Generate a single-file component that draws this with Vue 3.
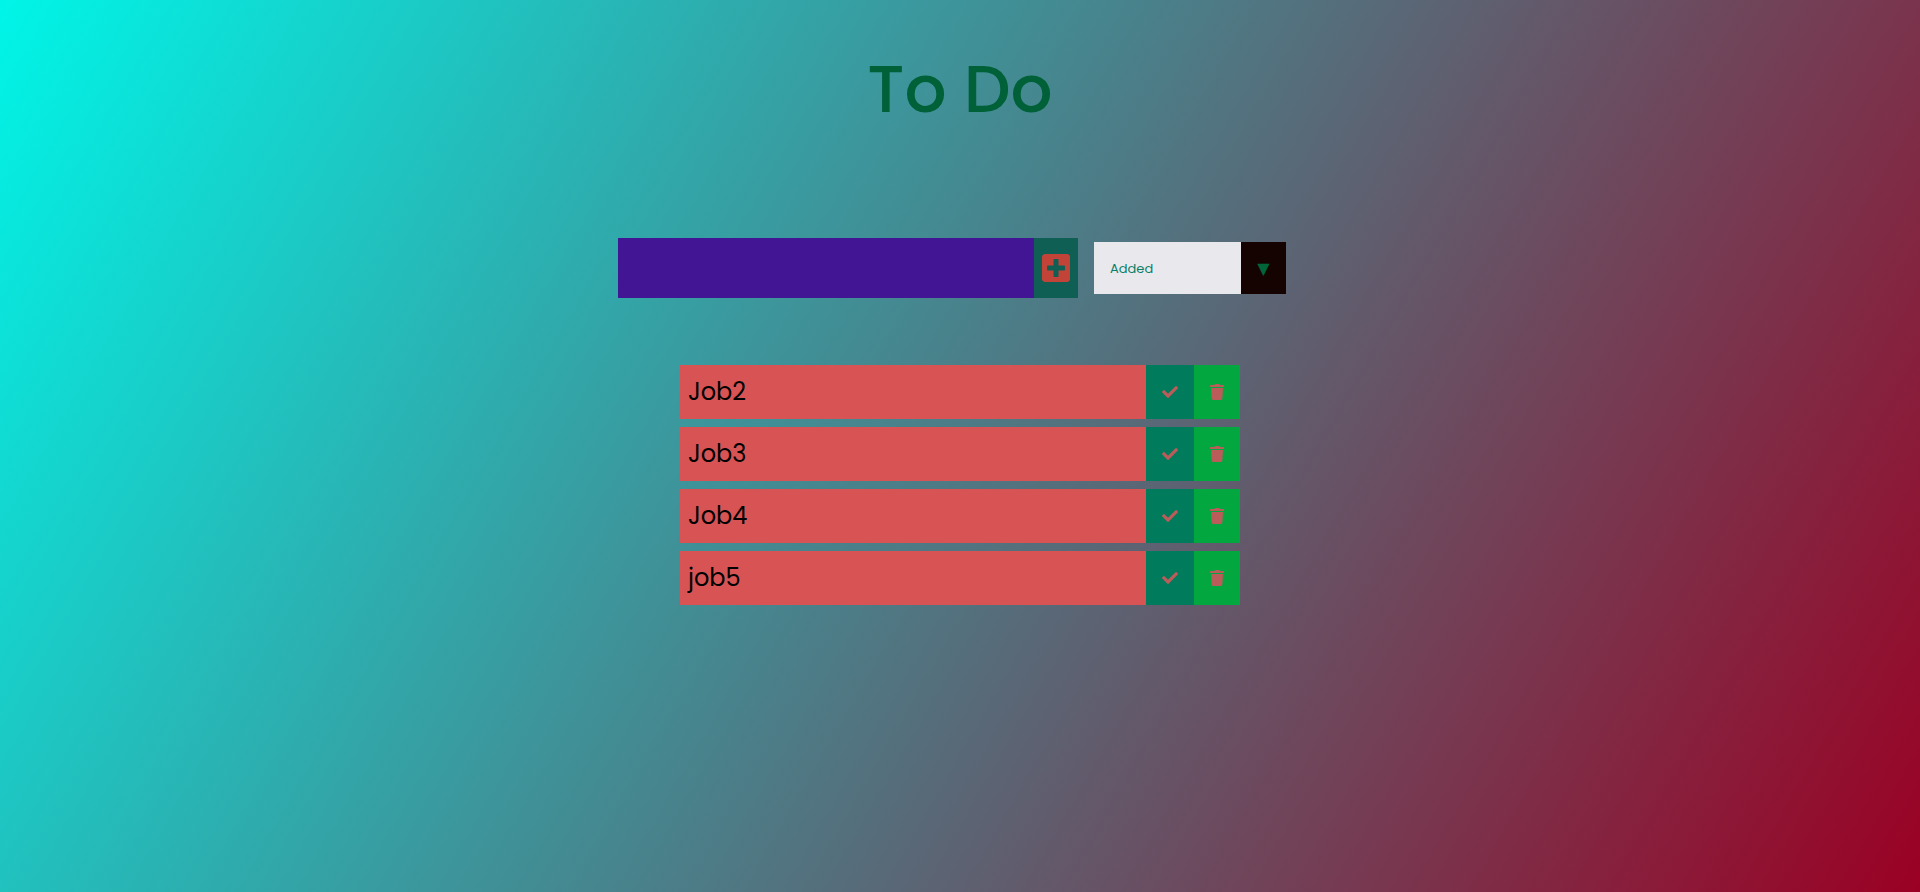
<script setup>
import { ref } from 'vue'

const draft = ref('')
const order = ref('added')
const jobs = ref(['Job2', 'Job3', 'Job4', 'job5'])

function addJob() {
  const name = draft.value.trim()
  if (name) jobs.value.push(name)
  draft.value = ''
}

function removeJob(index) {
  jobs.value.splice(index, 1)
}
</script>

<template>
  <div class="page">
    <header class="header">
      <h1 class="title">To Do</h1>
    </header>

    <main>
      <form class="toolbar" @submit.prevent="addJob">
        <div class="entry">
          <input v-model="draft" class="entry-input" type="text" aria-label="New job" />
          <button class="entry-add" type="submit" aria-label="Add job">
            <svg width="28" height="32" viewBox="0 0 448 512" aria-hidden="true">
              <path fill="currentColor" d="M400 32H48C21.500 32 0 53.500 0 80v352c0 26.500 21.500 48 48 48h352c26.500 0 48-21.500 48-48V80c0-26.500-21.500-48-48-48zm-32 252c0 6.600-5.400 12-12 12h-92v92c0 6.600-5.400 12-12 12h-56c-6.600 0-12-5.400-12-12v-92H92c-6.600 0-12-5.400-12-12v-56c0-6.600 5.400-12 12-12h92v-92c0-6.600 5.400-12 12-12h56c6.600 0 12 5.400 12 12v92h92c6.600 0 12 5.400 12 12v56z" />
            </svg>
          </button>
        </div>
        <div class="sort">
          <select v-model="order" class="sort-select" aria-label="Sort jobs">
            <option value="added">Added</option>
          </select>
          <span class="sort-arrow" aria-hidden="true">▼</span>
        </div>
      </form>

      <ul class="jobs">
        <li v-for="(job, index) in jobs" :key="index" class="job">
          <span class="job-name">{{ job }}</span>
          <button class="job-button job-done" type="button" :aria-label="`Complete ${job}`">
            <svg width="16" height="16" viewBox="0 0 512 512" aria-hidden="true">
              <path fill="currentColor" d="M173.898 439.404l-166.400-166.400c-9.997-9.997-9.997-26.206 0-36.204l36.203-36.204c9.997-9.998 26.207-9.998 36.204 0L192 312.690 432.095 72.596c9.997-9.997 26.207-9.997 36.204 0l36.203 36.204c9.997 9.997 9.997 26.206 0 36.204l-294.400 294.401c-9.998 9.997-26.207 9.997-36.204-.001z" />
            </svg>
          </button>
          <button class="job-button job-remove" type="button" :aria-label="`Delete ${job}`" @click="removeJob(index)">
            <svg width="14" height="16" viewBox="0 0 448 512" aria-hidden="true">
              <path fill="currentColor" d="M432 32H312l-9.400-18.700A24 24 0 0 0 281.100 0H166.800a23.720 23.720 0 0 0-21.400 13.300L136 32H16A16 16 0 0 0 0 48v32a16 16 0 0 0 16 16h416a16 16 0 0 0 16-16V48a16 16 0 0 0-16-16zM53.200 467a48 48 0 0 0 47.900 45h245.800a48 48 0 0 0 47.900-45L416 128H32z" />
            </svg>
          </button>
        </li>
      </ul>
    </main>
  </div>
</template>

<style>
body {
  margin: 0;
}
</style>

<style scoped>
.page {
  box-sizing: border-box;
  min-height: 100vh;
  padding-bottom: 32px;
  background: linear-gradient(120deg, #00f5e8, #9b0023);
  font-family: Poppins, Inter, sans-serif;
}

.header {
  display: flex;
  align-items: center;
  justify-content: center;
  min-height: 178px;
}

.title {
  margin: 0;
  color: #006038;
  font-size: 66px;
  font-weight: 500;
  line-height: 96px;
}

.toolbar {
  display: flex;
  flex-wrap: wrap;
  align-items: center;
  justify-content: center;
  min-height: 60px;
  padding: 60px 0;
}

.entry {
  display: flex;
  height: 60px;
}

.entry-input {
  box-sizing: border-box;
  width: 416px;
  min-width: 0;
  padding: 8px;
  border: 0;
  border-radius: 0;
  outline: 0;
  background: #421595;
  color: #fff;
  font: inherit;
  font-size: 32px;
}

.entry-add {
  display: flex;
  align-items: center;
  padding: 8px;
  border: 0;
  background: #0f5f55;
  color: #c24439;
  cursor: pointer;
}

.sort {
  position: relative;
  margin: 0 16px;
}

.sort-select {
  display: block;
  box-sizing: border-box;
  width: 192px;
  height: 52px;
  padding: 0 61px 0 16px;
  border: 0;
  border-radius: 0;
  appearance: none;
  background: #e9e8ed;
  color: #0b7f69;
  font: inherit;
  font-size: 13px;
  cursor: pointer;
}

.sort-arrow {
  position: absolute;
  top: 0;
  right: 0;
  display: flex;
  align-items: center;
  justify-content: center;
  width: 45px;
  height: 52px;
  background: #140300;
  color: #00663a;
  font-family: "DejaVu Sans", sans-serif;
  font-size: 16px;
  pointer-events: none;
}

.jobs {
  display: flex;
  flex-direction: column;
  gap: 8px;
  width: 560px;
  max-width: 100%;
  margin: 0 auto;
  padding: 7px 0 0;
  list-style: none;
}

.job {
  display: flex;
  min-height: 54px;
  background: #d85454;
}

.job-name {
  flex: 1;
  padding: 0 8px;
  color: #000;
  font-size: 24px;
  line-height: 54px;
}

.job-button {
  display: flex;
  align-items: center;
  padding: 0 16px;
  border: 0;
  color: #bb5c5a;
  cursor: pointer;
}

.job-done {
  background: #007b5c;
}

.job-remove {
  background: #03a740;
}
</style>
